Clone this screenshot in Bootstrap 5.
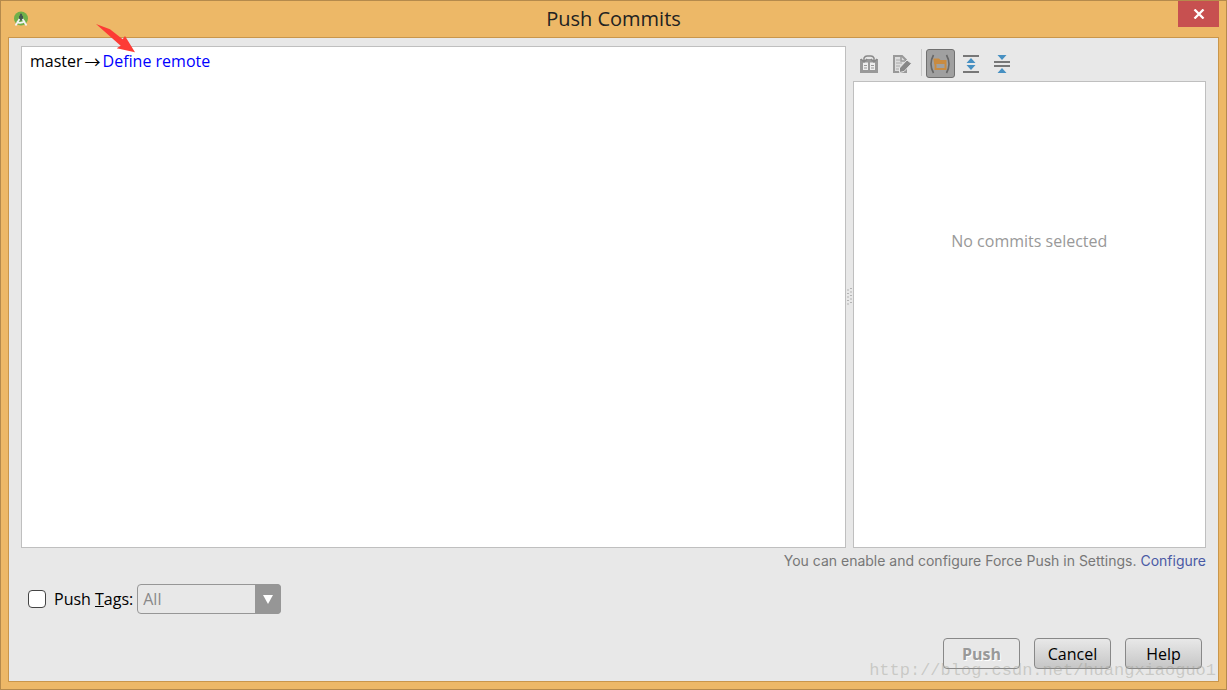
<!DOCTYPE html>
<html lang="en">
<head>
<meta charset="utf-8">
<meta name="viewport" content="width=device-width, initial-scale=1">
<title>Push Commits</title>
<link href="https://cdn.jsdelivr.net/npm/bootstrap@5.3.0/dist/css/bootstrap.min.css" rel="stylesheet">
<style>
body { font: 16px/24px "Open Sans", "Noto Sans", sans-serif; color: #000; background: #edb867; }
.window { border: 1px solid #b58a4c; padding: 0 7px 7px; }
.titlebar { height: 36px; }
.titlebar h1 { font-size: 20px; line-height: 36px; color: #222; }
.app-icon { margin: 10px 0 0 5px; }
.close-btn { width: 41px; height: 26px; background: #c75050; border: 0; padding: 0; }
.client { background: #e8e8e8; border: 1px solid #c9964b; padding: 8px 12px 12px; }
.split { display: grid; grid-template-columns: minmax(0, 7fr) 7px minmax(0, 3fr); }
.pane { background: #fff; border: 1px solid #bfbfbf; }
.repos { padding: 2px 8px; }
.branch { gap: 2px; }
.arrow { font-family: "Noto Sans CJK SC", sans-serif; }
.toolbar { height: 35px; padding: 3px 0 0 2px; }
.tool { width: 29px; height: 29px; padding: 0; border: 1px solid transparent; border-radius: 3px; background: none; }
.tool.pressed { background: #a0a0a0; border-color: #707070; }
.tool svg { display: block; margin: auto; }
.tool-group { gap: 2px; }
.separator { width: 1px; height: 27px; background: #c8c8c8; }
.empty { padding-top: 147px; color: #999; }
.remote { color: #00f; }
.hint { font: 14px/20px Inter, "Noto Sans", sans-serif; color: #777; padding-top: 3px; }
.hint a { color: #4a5aa5; }
.tags { margin-top: 13px; padding-left: 7px; }
.tags .form-check-input { width: 18px; height: 18px; margin: 0; border: 1px solid #444; border-radius: 4px; }
.scope { width: 144px; height: 30px; }
.scope select { appearance: none; width: 100%; height: 30px; border: 1px solid #969696; border-radius: 4px; background: #e8e8e8; color: #888; padding: 0 5px; opacity: 1; }
.scope svg { position: absolute; top: 0; right: 0; pointer-events: none; }
.actions { margin-top: 24px; gap: 14px; padding-right: 4px; }
.action { width: 77px; height: 31px; padding: 0; border: 1px solid #888; border-radius: 4px; color: #000; background: linear-gradient(#e8e8e8, #c6c6c6); }
.action:disabled { background: #e8e8e8; color: #999; font-weight: 700; text-shadow: 1px 1px #fff; }
.watermark { right: 10px; bottom: 6px; font: 17px/24px "Liberation Mono", monospace; color: rgba(150, 150, 140, .38); pointer-events: none; }
.pointer { left: 93px; top: 21px; pointer-events: none; }
</style>
</head>
<body>
<div class="window position-relative d-flex flex-column min-vh-100">
  <header class="titlebar d-flex">
    <div class="flex-fill w-25">
      <svg class="app-icon d-block" width="16" height="16" viewBox="0 0 16 16" aria-hidden="true">
        <circle cx="8" cy="7.500" r="7" fill="#6fb04a"/>
        <path d="M7.500 3h1v2h1v4h-3V5h1z" fill="#455a50" stroke="#455a50"/>
        <path d="M2.500 14.500 6.500 8M13.500 14.500 9.500 8M3.500 11q4.500 2 8.500-1" fill="none" stroke="#f4f4f4" stroke-width="1.700"/>
      </svg>
    </div>
    <h1 class="m-0 fw-normal">Push Commits</h1>
    <div class="flex-fill w-25 d-flex justify-content-end">
      <button type="button" class="close-btn" aria-label="Close">
        <svg class="d-block mx-auto" width="12" height="10" viewBox="0 0 12 10"><path d="M1.500.5l9 9M10.500.5l-9 9" stroke="#fff" stroke-width="2.300"/></svg>
      </button>
    </div>
  </header>

  <main class="client flex-grow-1 d-flex flex-column">
    <div class="split flex-grow-1">
      <section class="pane repos" aria-label="Repositories">
        <div class="branch d-flex"><span>master</span><span class="arrow">→</span><a class="remote text-decoration-none" href="#">Define remote</a></div>
      </section>
      <div class="d-flex align-items-center justify-content-center">
        <svg width="5" height="18" viewBox="0 0 5 18" aria-hidden="true"><path d="M0 2h2M3 0.500h2M0 5.500h2M3 4h2M0 9h2M3 7.500h2M0 12.500h2M3 11h2M0 16h2M3 14.500h2" stroke="#b4b4b4"/></svg>
      </div>
      <section class="d-flex flex-column" aria-label="Commit details">
        <div class="toolbar d-flex">
          <button type="button" class="tool" aria-label="Show diff" disabled>
            <svg width="20" height="20" viewBox="0 0 20 20"><path d="M1 5h18v14H1z" fill="#999"/><path d="M4 8.500h5V16H4zM11 8.500h5V16h-5z" fill="#eee"/><path d="M5 11.500h3M5 14h3M12 11.500h3M12 14h3" stroke="#999"/><path d="M5 7V4q1-2 3-2h4q2 0 3 2v3" fill="none" stroke="#e8e8e8" stroke-width="4"/><path d="M5 7V4q1-2 3-2h4q2 0 3 2v3M2 5 5 8 8 5M12 5 15 8 18 5" fill="none" stroke="#888" stroke-width="1.500"/></svg>
          </button>
          <button type="button" class="tool ms-1" aria-label="Edit source" disabled>
            <svg width="20" height="20" viewBox="0 0 20 20"><path d="M2 2h8l4 4v12H2z" fill="#ddd" stroke="#999" stroke-width="2"/><path d="M9 1v6h6" fill="none" stroke="#999" stroke-width="1.500"/><path d="M4 6h4M4 9h6M4 12h4M4 15h3" stroke="#aaa"/><path d="M7.500 18.500v-4.500l7.500-8 4.500 3.500-7.500 8z" fill="#888" stroke="#e8e8e8"/></svg>
          </button>
          <div class="separator ms-1 me-1"></div>
          <div class="tool-group d-flex">
            <button type="button" class="tool pressed" aria-label="Group by directory" aria-pressed="true">
              <svg width="20" height="20" viewBox="0 0 20 20"><path d="M3.500 1Q-1.500 10 3.500 19M16.500 1q5 9 0 18" fill="none" stroke="#666" stroke-width="1.600"/><path d="M4.500 5.500h4l1.500 1.500h5.500v8h-10v-4z" fill="none" stroke="#c98b40" stroke-width="2"/><path d="M4 5h5l1 1h6v4H4z" fill="#c98b40"/></svg>
            </button>
            <button type="button" class="tool" aria-label="Expand all">
              <svg width="18" height="20" viewBox="0 0 18 20"><path d="M1 2h16M1 18h16" stroke="#777" stroke-width="2"/><path d="M4.500 9 9 4l4.500 5zM4.500 11 9 16l4.500-5z" fill="#4790c2"/></svg>
            </button>
            <button type="button" class="tool" aria-label="Collapse all">
              <svg width="18" height="20" viewBox="0 0 18 20"><path d="M1 8h16M1 12h16" stroke="#777" stroke-width="2"/><path d="M4.500 1 9 6l4.500-5zM4.500 19 9 14l4.500 5z" fill="#4790c2"/></svg>
            </button>
          </div>
        </div>
        <div class="pane empty flex-grow-1 text-center">No commits selected</div>
      </section>
    </div>

    <div class="hint text-end">You can enable and configure Force Push in Settings. <a class="text-decoration-none" href="#">Configure</a></div>

    <div class="tags d-flex align-items-center">
      <input class="form-check-input" type="checkbox" id="pushTags">
      <label class="ms-2 me-1" for="pushTags">Push <u>T</u>ags:</label>
      <div class="scope position-relative">
        <select aria-label="Tags to push" disabled><option>All</option></select>
        <svg width="26" height="30" viewBox="0 0 26 30" aria-hidden="true"><path d="M0 0h22q4 0 4 4v22q0 4-4 4H0z" fill="#969696"/><path d="M8 11h10l-5 9z" fill="#fff"/></svg>
      </div>
    </div>

    <div class="actions d-flex justify-content-end">
      <button type="button" class="action" disabled>Push</button>
      <button type="button" class="action">Cancel</button>
      <button type="button" class="action">Help</button>
    </div>
  </main>

  <svg class="pointer position-absolute" width="42" height="32" viewBox="0 0 42 32" aria-hidden="true"><path d="M2 2 16 7.300 28.700 17.300 31 14 41 30.300 22.700 26.300 26.700 23.700 21 18.700z" fill="#fd3b35"/></svg>
  <div class="watermark position-absolute">http://blog.csdn.net/huangxiaoguo1</div>
</div>
<script src="https://cdn.jsdelivr.net/npm/bootstrap@5.3.0/dist/js/bootstrap.bundle.min.js"></script>
</body>
</html>
